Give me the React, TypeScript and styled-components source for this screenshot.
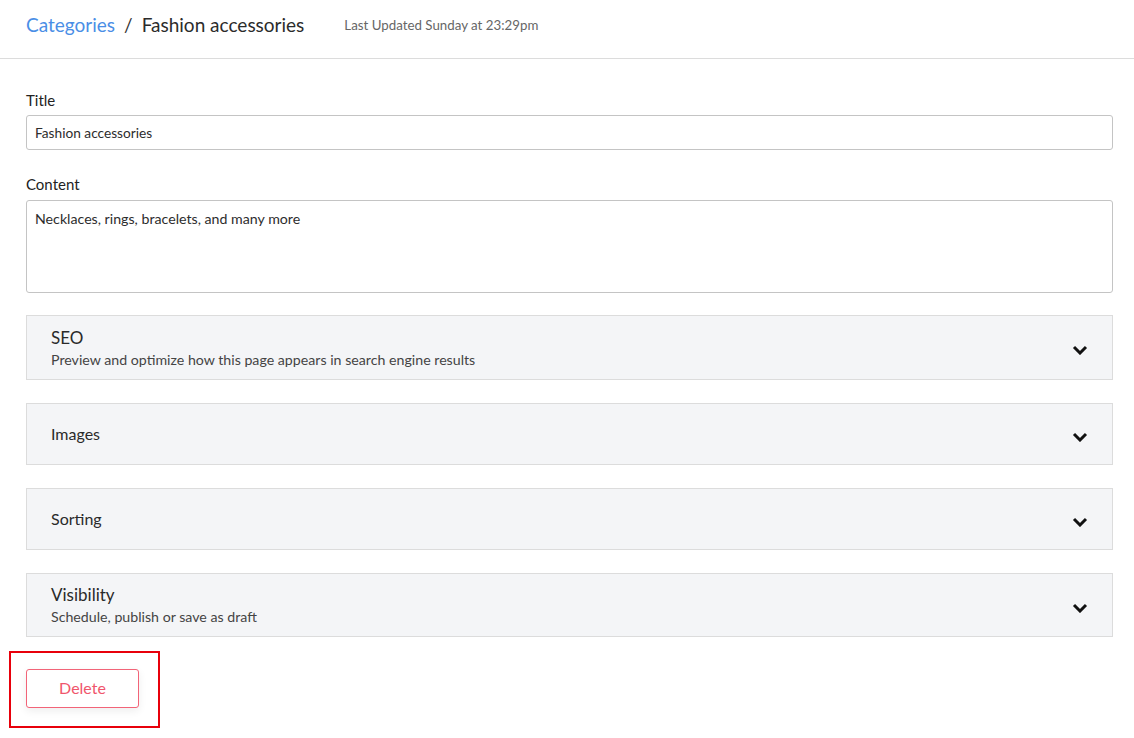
import React from "react";
import styled, { createGlobalStyle } from "styled-components";

const Global = createGlobalStyle`
  html, body { margin: 0; padding: 0; background: #fff; }
  body { font-family: Lato, "Open Sans", sans-serif; color: #222; }
  * { box-sizing: border-box; }
`;

const Page = styled.div`
  width: 1134px;
`;

const Header = styled.header`
  height: 59px;
  border-bottom: 1px solid #dcdcdc;
  display: flex;
  align-items: center;
  padding: 0 26px 10px;
`;

const Crumb = styled.a`
  font-size: 19px;
  color: #4a8ee6;
  text-decoration: none;
`;

const Sep = styled.span`
  font-size: 19px;
  color: #333;
  margin: 0 9px;
`;

const Current = styled.span`
  font-size: 19px;
  color: #2b2b2b;
`;

const Updated = styled.span`
  font-size: 13.3px;
  color: #666;
  margin-left: 40px;
  margin-top: 2px;
`;

const Main = styled.main`
  padding: 32px 21px 0 26px;
  display: flex;
  flex-direction: column;
`;

const Field = styled.div<{ $gap: number }>`
  display: flex;
  flex-direction: column;
  margin-bottom: ${(p) => p.$gap}px;
`;

const Label = styled.label<{ $space: number }>`
  font-size: 15px;
  color: #222;
  line-height: 18px;
  margin-bottom: ${(p) => p.$space}px;
`;

const Input = styled.input`
  height: 35px;
  border: 1px solid #c4c4c4;
  border-radius: 3px;
  padding: 0 8px;
  font-family: Lato, sans-serif;
  font-size: 13.7px;
  color: #2d2d2d;
  outline: none;
`;

const TextArea = styled.textarea`
  height: 93px;
  border: 1px solid #c4c4c4;
  border-radius: 3px;
  padding: 9px 8px;
  font-family: Lato, sans-serif;
  font-size: 14.2px;
  color: #2d2d2d;
  resize: none;
  outline: none;
`;

const Panel = styled.div<{ $h: number }>`
  height: ${(p) => p.$h}px;
  background: #f4f5f7;
  border: 1px solid #dcdcdc;
  display: flex;
  align-items: center;
  justify-content: space-between;
  padding: 0 24px 0 24px;
  margin-bottom: 23px;
`;

const PanelText = styled.div`
  display: flex;
  flex-direction: column;
  gap: 1px;
`;

const PanelTitle = styled.div<{ $big: boolean }>`
  font-size: ${(p) => (p.$big ? 17 : 16)}px;
  color: #2a2a2a;
  line-height: 22px;
`;

const PanelSub = styled.div`
  font-size: 14.2px;
  color: #444;
  line-height: 19px;
`;

const ChevronWrap = styled.span`
  display: flex;
  margin-top: 5px;
`;

const Chevron = () => (
  <ChevronWrap>
    <svg width="16" height="10" viewBox="0 0 16 10">
      <polyline points="2,2 8,8 14,2" fill="none" stroke="#111" strokeWidth="3" strokeLinejoin="miter" />
    </svg>
  </ChevronWrap>
);

const Highlight = styled.div`
  align-self: flex-start;
  margin: -9px 0 0 -17px;
  border: 2px solid #e8000b;
  padding: 16px 19px 18px 15px;
`;

const DeleteButton = styled.button`
  width: 113px;
  height: 39px;
  padding: 0 0 2px;
  background: #fff;
  border: 1px solid #f26478;
  border-radius: 3px;
  color: #f0566c;
  font-family: Lato, sans-serif;
  font-size: 16px;
  box-shadow: 0 3px 8px rgba(0, 0, 0, 0.07);
  cursor: pointer;
`;

const panels = [
  { title: "SEO", sub: "Preview and optimize how this page appears in search engine results", h: 65 },
  { title: "Images", h: 62 },
  { title: "Sorting", h: 62 },
  { title: "Visibility", sub: "Schedule, publish or save as draft", h: 64 },
];

export default function App() {
  return (
    <Page>
      <Global />
      <Header>
        <Crumb href="#">Categories</Crumb>
        <Sep>/</Sep>
        <Current>Fashion accessories</Current>
        <Updated>Last Updated Sunday at 23:29pm</Updated>
      </Header>
      <Main>
        <Field $gap={25}>
          <Label $space={6}>Title</Label>
          <Input defaultValue="Fashion accessories" />
        </Field>
        <Field $gap={22}>
          <Label $space={7}>Content</Label>
          <TextArea defaultValue="Necklaces, rings, bracelets, and many more" />
        </Field>
        {panels.map((p) => (
          <Panel key={p.title} $h={p.h}>
            <PanelText>
              <PanelTitle $big={!!p.sub}>{p.title}</PanelTitle>
              {p.sub && <PanelSub>{p.sub}</PanelSub>}
            </PanelText>
            <Chevron />
          </Panel>
        ))}
        <Highlight>
          <DeleteButton>Delete</DeleteButton>
        </Highlight>
      </Main>
    </Page>
  );
}
